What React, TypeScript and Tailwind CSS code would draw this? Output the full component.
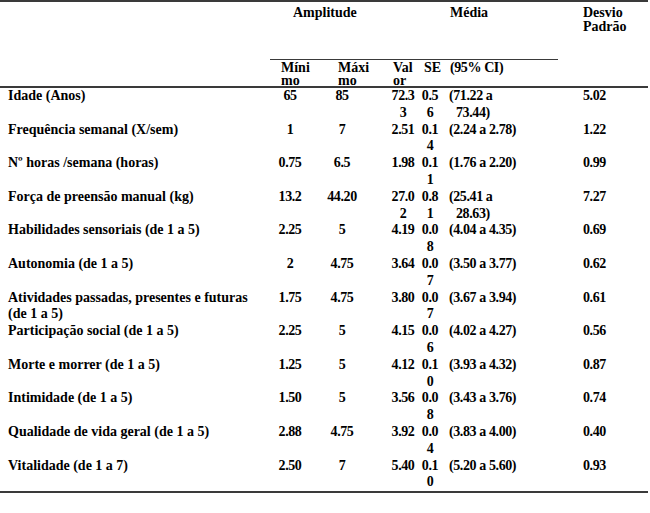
type Row = {
  label: string[];
  mn: string;
  mx: string;
  val: string[];
  se: string[];
  ci: string[];
  sd: string;
};

const rows: Row[] = [
  { label: ["Idade (Anos)"], mn: "65", mx: "85", val: ["72.3", "3"], se: ["0.5", "6"], ci: ["(71.22 a", "73.44)"], sd: "5.02" },
  { label: ["Frequência semanal (X/sem)"], mn: "1", mx: "7", val: ["2.51"], se: ["0.1", "4"], ci: ["(2.24 a 2.78)"], sd: "1.22" },
  { label: ["Nº horas /semana (horas)"], mn: "0.75", mx: "6.5", val: ["1.98"], se: ["0.1", "1"], ci: ["(1.76 a 2.20)"], sd: "0.99" },
  { label: ["Força de preensão manual (kg)"], mn: "13.2", mx: "44.20", val: ["27.0", "2"], se: ["0.8", "1"], ci: ["(25.41 a", "28.63)"], sd: "7.27" },
  { label: ["Habilidades sensoriais (de 1 a 5)"], mn: "2.25", mx: "5", val: ["4.19"], se: ["0.0", "8"], ci: ["(4.04 a 4.35)"], sd: "0.69" },
  { label: ["Autonomia (de 1 a 5)"], mn: "2", mx: "4.75", val: ["3.64"], se: ["0.0", "7"], ci: ["(3.50 a 3.77)"], sd: "0.62" },
  { label: ["Atividades passadas, presentes e futuras", "(de 1 a 5)"], mn: "1.75", mx: "4.75", val: ["3.80"], se: ["0.0", "7"], ci: ["(3.67 a 3.94)"], sd: "0.61" },
  { label: ["Participação social (de 1 a 5)"], mn: "2.25", mx: "5", val: ["4.15"], se: ["0.0", "6"], ci: ["(4.02 a 4.27)"], sd: "0.56" },
  { label: ["Morte e morrer (de 1 a 5)"], mn: "1.25", mx: "5", val: ["4.12"], se: ["0.1", "0"], ci: ["(3.93 a 4.32)"], sd: "0.87" },
  { label: ["Intimidade (de 1 a 5)"], mn: "1.50", mx: "5", val: ["3.56"], se: ["0.0", "8"], ci: ["(3.43 a 3.76)"], sd: "0.74" },
  { label: ["Qualidade de vida geral (de 1 a 5)"], mn: "2.88", mx: "4.75", val: ["3.92"], se: ["0.0", "4"], ci: ["(3.83 a 4.00)"], sd: "0.40" },
  { label: ["Vitalidade (de 1 a 7)"], mn: "2.50", mx: "7", val: ["5.40"], se: ["0.1", "0"], ci: ["(5.20 a 5.60)"], sd: "0.93" },
];

const cols = "grid grid-cols-[258px_48px_74px_30px_24px_134px_1fr]";

function Lines({ items, className = "" }: { items: string[]; className?: string }) {
  return (
    <div className={className}>
      {items.map((t, i) => (
        <div key={i} className="whitespace-nowrap">
          {t}
        </div>
      ))}
    </div>
  );
}

export default function App() {
  return (
    <div
      className="w-[650px] h-[513px] bg-white text-black font-bold text-[14px]"
      style={{ fontFamily: '"Liberation Serif", "Times New Roman", serif' }}
    >
      <div className="w-[648px] border-t-2 border-[#3a3a3a]">
        {/* header */}
        <div className={`${cols} grid-rows-[58px_26px] pl-2 border-b-2 border-[#3a3a3a]`}>
          <div className="col-start-2 col-span-2 ml-1 border-b border-[#3a3a3a] pt-[2px] leading-[17px] pl-[23px]">
            Amplitude
          </div>
          <div className="col-start-4 col-span-3 mr-[18px] border-b border-[#3a3a3a] pt-[2px] leading-[17px] pl-[62px]">
            Média
          </div>
          <div className="col-start-7 row-span-2 row-start-1 pl-[7px] pt-[4px] leading-[14px]">
            <div>Desvio</div>
            <div>Padrão</div>
          </div>
          <div className="col-start-2 row-start-2 pl-[15px] pt-[1px] leading-[13px]">
            <div>Míni</div>
            <div>mo</div>
          </div>
          <div className="col-start-3 row-start-2 pl-[24px] pt-[1px] leading-[13px]">
            <div>Máxi</div>
            <div>mo</div>
          </div>
          <div className="col-start-4 row-start-2 pl-[5px] pt-[1px] leading-[13px]">
            <div>Val</div>
            <div>or</div>
          </div>
          <div className="col-start-5 row-start-2 pl-[6px] pt-[1px] leading-[13px]">SE</div>
          <div className="col-start-6 row-start-2 pl-[8px] pt-[1px] leading-[13px] tracking-[-0.4px]">(95% CI)</div>
        </div>

        {/* body */}
        <div className="border-b-2 border-[#3a3a3a]">
          {rows.map((r, i) => (
            <div key={i} className={`${cols} pl-2 h-[33.6px] leading-[16.8px]`}>
              <Lines items={r.label} />
              <div className="text-center tracking-[-0.4px]">{r.mn}</div>
              <div className="text-center pr-[18px] tracking-[-0.4px]">{r.mx}</div>
              <Lines items={r.val} className="text-center tracking-[-0.4px]" />
              <Lines items={r.se} className="text-center tracking-[-0.4px]" />
              <div className="pl-[7px] tracking-[-0.4px]">
                {r.ci.map((t, j) => (
                  <div key={j} className={j > 0 ? "pl-[7px] whitespace-nowrap" : "whitespace-nowrap"}>
                    {t}
                  </div>
                ))}
              </div>
              <div className="pl-[7px] tracking-[-0.4px]">{r.sd}</div>
            </div>
          ))}
        </div>
      </div>
    </div>
  );
}
